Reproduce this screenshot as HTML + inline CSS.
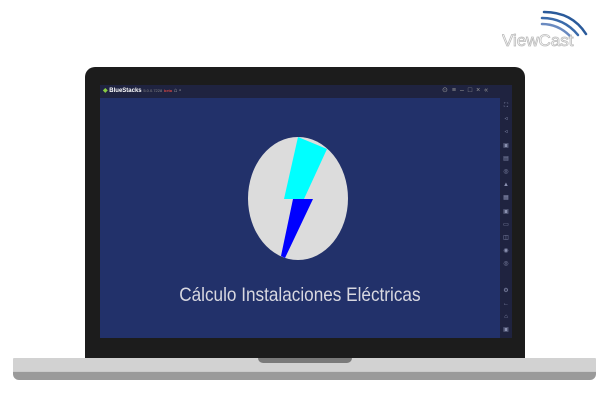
<!DOCTYPE html>
<html><head><style>
body{margin:0;width:602px;height:414px;background:#fff;position:relative;overflow:hidden;font-family:"Liberation Sans",sans-serif}
div{position:absolute}
</style></head><body>
<div style="left:502px;top:4px;width:92px;height:46px">
<svg width="92" height="46"><g fill="none" stroke-linecap="round"><path d="M42 8 Q70 8 84 30" stroke="#2a5a9a" stroke-width="2.5"/><path d="M40 14 Q62 14 76 31" stroke="#3a6aaa" stroke-width="2.5"/><path d="M40 20 Q56 20 68 32" stroke="#6a8ac0" stroke-width="2.5"/></g>
<text x="0" y="42" font-size="17" fill="#fff" stroke="#bbb" stroke-width="0.8" font-family="Liberation Sans">ViewCast</text></svg></div>
<div style="left:85px;top:67px;width:440px;height:292px;background:#1c1c1c;border-radius:10px 10px 0 0"></div>
<div style="left:100px;top:85px;width:412px;height:13px;background:#1f2340"></div>
<div style="left:103px;top:87px;font-size:6px;color:#fff;font-weight:bold"><span style="color:#8c4">◆</span> BlueStacks <span style="font-weight:normal;color:#888;font-size:4px">5.0.0.7228</span> <span style="color:#c44;font-size:4px">beta</span> <span style="color:#aaa;font-weight:normal">⌂ ▫</span></div>
<div style="left:442px;top:86px;font-size:7px;color:#999;letter-spacing:4px">⊙≡–□×«</div>
<div style="left:100px;top:98px;width:400px;height:240px;background:#22316a"></div>
<div style="left:500px;top:98px;width:12px;height:240px;background:#1f2340"></div>
<div style="left:501px;top:100px;width:10px;font-size:6px;color:#8a90b0;line-height:13.2px;text-align:center">⛶<br>◃<br>◃<br>▣<br>▤<br>◎<br>▲<br>▦<br>▣<br>▭<br>◫<br>◉<br>◎<br><br>⚙<br>←<br>⌂<br>▣</div>
<svg style="position:absolute;left:0;top:0" width="602" height="414">
<ellipse cx="298" cy="198.5" rx="50" ry="61.5" fill="#dcdcdc"/>
<polygon points="298,137 327,149 304,199 284,199" fill="#00ffff"/>
<polygon points="293,199 313,199 285,258 281,256" fill="#0000ff"/>
</svg>
<div style="left:88px;top:284px;width:400px;text-align:center;font-size:19.5px;color:#d8d8e0;transform:scaleX(0.88);transform-origin:299px 0">Cálculo Instalaciones Eléctricas</div>
<div style="left:13px;top:358px;width:583px;height:22px;background:linear-gradient(#d2d2d2 0,#d2d2d2 62%,#9a9a9a 64%,#9a9a9a 100%);border-radius:1px 1px 6px 6px"></div>
<div style="left:258px;top:358px;width:94px;height:5px;background:#7a7a7a;border-radius:0 0 6px 6px"></div>
</body></html>
